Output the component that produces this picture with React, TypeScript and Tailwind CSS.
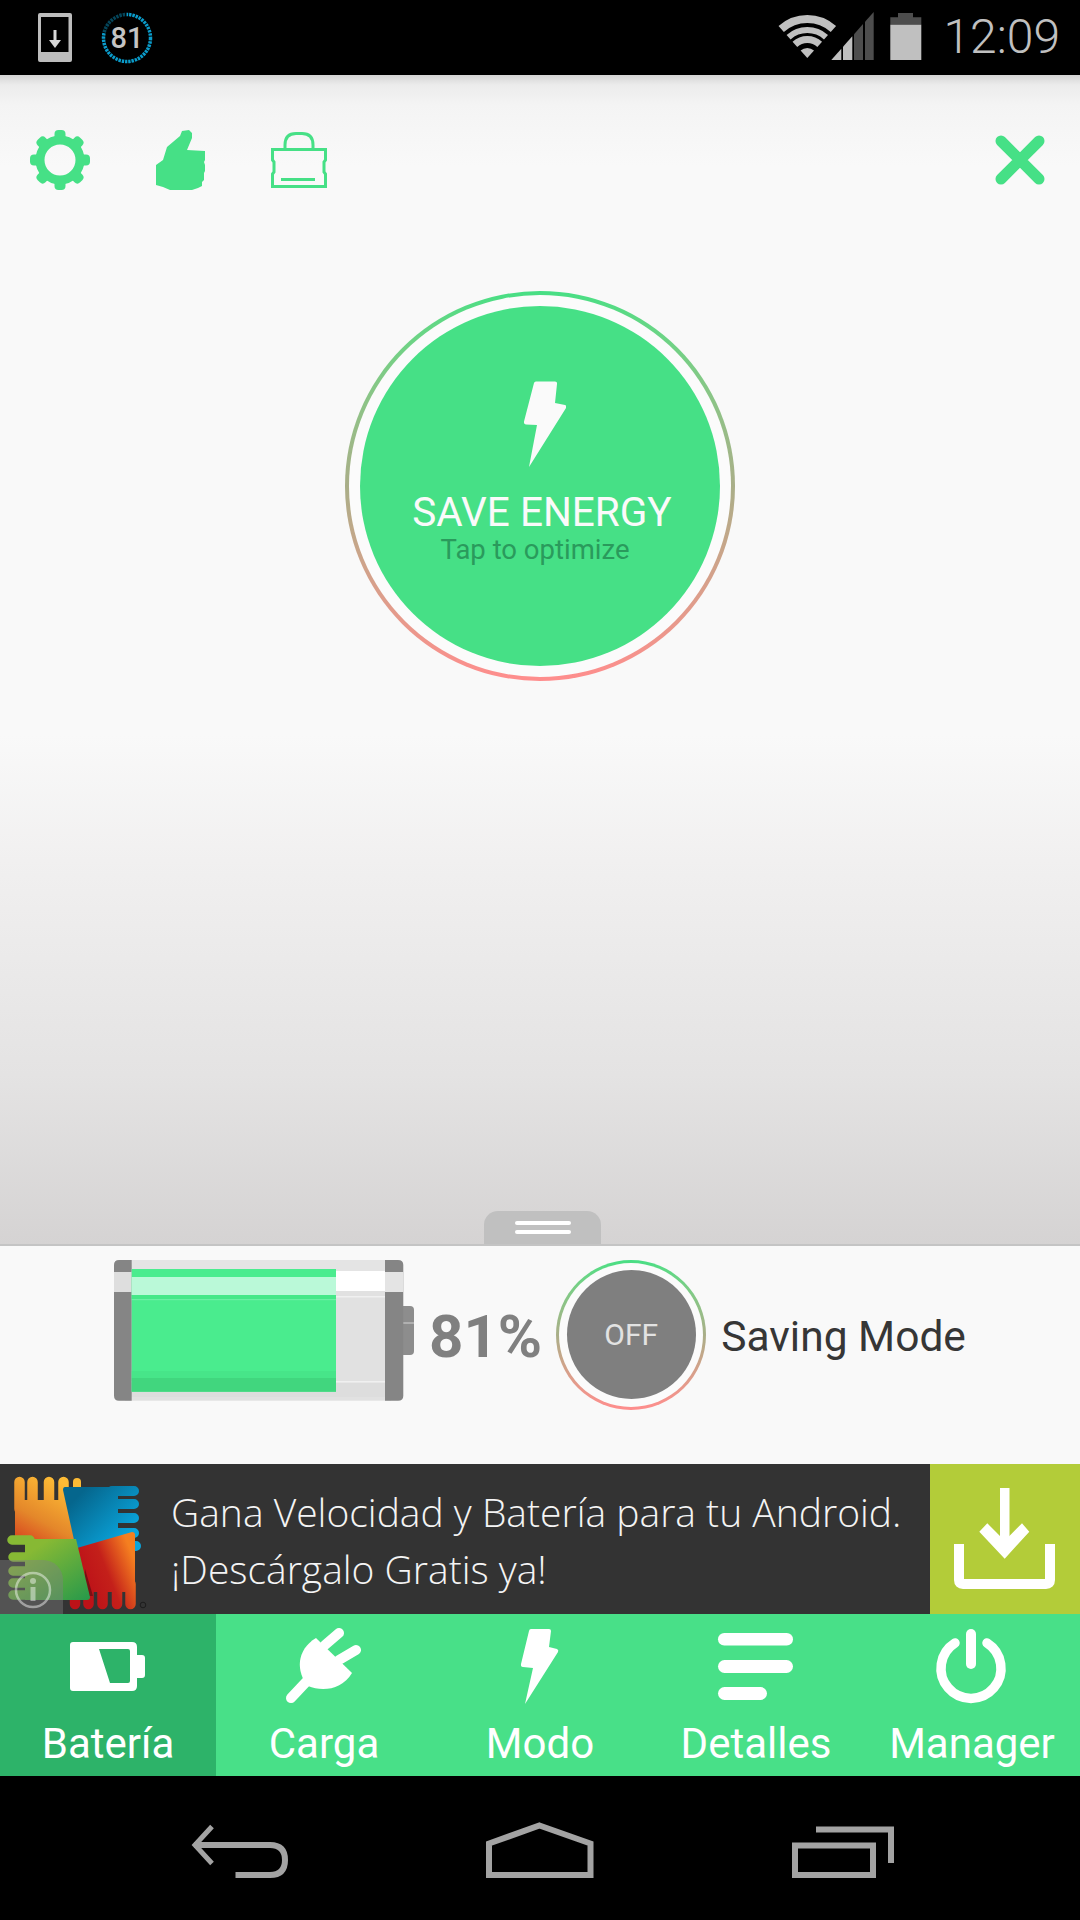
import React from 'react';

const GREEN = '#46e086';

const tabs = ['Batería', 'Carga', 'Modo', 'Detalles', 'Manager'];

const GearIcon = () => (
  <svg width="60" height="60" viewBox="0 0 60 60" className="shrink-0">
    <circle cx="30" cy="30" r="20" fill="none" stroke={GREEN} strokeWidth="9" />
    {[0, 45, 90, 135, 180, 225, 270, 315].map(a => (
      <rect key={a} x="24.5" y="0" width="11" height="14" rx="4" fill={GREEN} transform={`rotate(${a} 30 30)`} />
    ))}
  </svg>
);

const ThumbIcon = () => (
  <svg width="49" height="60" viewBox="0 0 49 60" className="shrink-0">
    <path
      d="M0 35 L7 30 L11 17 L24 6 L26 1 L33 0 L36 3 L36 8 L31 20 L49 21 L49 30 L48 32 L49 35 L49 41 L48 43 L48 50 L46 52 L46 56 L42 58 L36 60 L14 60 L7 57 L0 55 Z"
      fill={GREEN}
    />
  </svg>
);

const BagIcon = () => (
  <svg width="56" height="60" viewBox="272 130 56 60" className="shrink-0">
    <path d="M286 149 V145 Q286 133.500 297 133.500 H303 Q314 133.500 314 145 V149" fill="none" stroke={GREEN} strokeWidth="3" />
    <path d="M273.500 149.500 H326.500 V160 L325 162 V172 L326.500 174 V186.500 H273.500 V174 L275 172 V162 L273.500 160 Z" fill="none" stroke={GREEN} strokeWidth="3" />
    <rect x="282" y="178" width="34" height="3" fill={GREEN} />
  </svg>
);

const CloseIcon = () => (
  <svg width="50" height="50" viewBox="0 0 50 50" className="shrink-0 mt-[5px]">
    <path d="M6 6 L44 44 M44 6 L6 44" stroke={GREEN} strokeWidth="11" strokeLinecap="round" />
  </svg>
);

const RingGradient = () => (
  <div className="absolute inset-0 rounded-full bg-linear-to-b from-[#46df84] via-[#a9ae88] to-[#ff8d8d]" />
);

const StatusBar = () => (
  <div className="h-[75px] shrink-0 bg-black flex items-start justify-between">
    <div className="flex items-start pl-[38px] pt-[13px]">
      <svg width="34" height="49" viewBox="38 13 34 49">
        <path d="M40 13 H70 Q72 13 72 15 V60 Q72 62 70 62 H40 Q38 62 38 60 V15 Q38 13 40 13 Z M41 17 V52 H68.500 V17 Z" fill="#bdbdbd" fillRule="evenodd" />
        <path d="M53.500 30 H56.500 V40 H61 L55 48 L49 40 H53.500 Z" fill="#d8d8d8" />
      </svg>
      <div className="relative ml-[29px] -mt-[1px] w-[52px] h-[52px] flex items-center justify-center">
        <svg width="52" height="52" viewBox="0 0 52 52" className="absolute inset-0">
          <circle cx="26" cy="26" r="23.500" fill="none" stroke="#0a9ccb" strokeWidth="3.500" strokeDasharray="2.400 0.900" />
          <path d="M26 2.500 A23.500 23.500 0 0 0 3 21" fill="none" stroke="#000" strokeOpacity="0.55" strokeWidth="4.500" />
        </svg>
        <span className="text-[29px] leading-none font-medium text-[#c4c4c4]">81</span>
      </div>
    </div>
    <div className="flex items-start pr-[20px]">
      <svg width="150" height="56" viewBox="778 8 150 56" className="mt-[8px]">
        <path d="M783.200 29 A39 39 0 0 1 835.400 29" fill="none" stroke="#c0c0c0" strokeWidth="8" />
        <path d="M790.600 37.200 A28 28 0 0 1 828 37.200" fill="none" stroke="#c0c0c0" strokeWidth="6" />
        <path d="M796.900 44.300 A18.500 18.500 0 0 1 821.700 44.300" fill="none" stroke="#c0c0c0" strokeWidth="7" />
        <path d="M809.300 58 L802.600 50.600 A10 10 0 0 1 816 50.600 Z" fill="#c0c0c0" />
        <polygon points="833.300,60 843.300,48.700 843.300,60" fill="#c0c0c0" />
        <polygon points="845,46.800 854.300,36.200 854.300,60 845,60" fill="#c0c0c0" />
        <polygon points="856,34.300 865,24.100 865,60 856,60" fill="#4d4d4d" />
        <polygon points="867,21.800 875.700,12 875.700,60 867,60" fill="#4d4d4d" />
        <path d="M900 13 H915 V17.300 H923.300 V24.700 H892.300 V17.300 H900 Z" fill="#4d4d4d" />
        <rect x="892.300" y="24.700" width="31" height="35.300" fill="#c0c0c0" />
      </svg>
      <span className="ml-[17px] mt-[9px] text-[48px] leading-[56px] font-light text-[#c0c0c0]">12:09</span>
    </div>
  </div>
);

const SaveButton = () => (
  <div className="relative self-center mt-[101px] w-[390px] h-[390px] rounded-full">
    <RingGradient />
    <div className="absolute inset-[4px] rounded-full bg-[#fbfbfb]" />
    <div className="absolute inset-[15px] rounded-full bg-[#46e086] flex flex-col items-center pt-[75px]">
      <svg width="42" height="86" viewBox="525 381 42 86" className="ml-[9px]">
        <path d="M535 383 Q535.300 381.500 537 381.500 H556 Q558.500 381.500 558 384 L556 403 L566 405 Q568 406 567 408 L530 467 L538 425 L527 424.500 Q524.500 424 525 421.500 Z" fill="#fafafa" />
      </svg>
      <span className="mt-[23px] ml-[4px] text-[40.5px] leading-[44px] text-[#fafafa]">SAVE ENERGY</span>
      <span className="-mt-[1px] pr-[10px] text-[27.5px] leading-[34px] text-[#2a9a5c]">Tap to optimize</span>
    </div>
  </div>
);

const BatteryGraphic = () => (
  <svg width="310" height="150" viewBox="110 1255 310 150" className="shrink-0">
    <path d="M403 1306 H410 Q414 1306 414 1310 V1351 Q414 1355 410 1355 H403 Z" fill="#8d8d8d" />
    <rect x="403" y="1322" width="11" height="2" fill="#b0b0b0" />
    <rect x="125" y="1260" width="266" height="140.700" fill="#e1e1e1" />
    <rect x="125" y="1260" width="266" height="11" fill="#e4e4e4" />
    <rect x="125" y="1271" width="266" height="20" fill="#ffffff" />
    <rect x="125" y="1296" width="266" height="1.500" fill="#f0f0f0" />
    <rect x="125" y="1381" width="266" height="1.500" fill="#f0f0f0" />
    <rect x="125" y="1383" width="266" height="14" fill="#dddddd" />
    <path d="M119 1260 H131.700 V1400.700 H119 Q114 1400.700 114 1395.700 V1265 Q114 1260 119 1260 Z" fill="#858585" />
    <rect x="114" y="1272" width="17.700" height="20" fill="#dedede" />
    <path d="M385 1260 H398 Q403.300 1260 403.300 1265 V1395.700 Q403.300 1400.700 398 1400.700 H385 Z" fill="#858585" />
    <rect x="385" y="1272" width="18.300" height="20" fill="#e4e4e4" />
    <rect x="131.700" y="1269" width="204.300" height="122.700" fill="#4aec8e" />
    <rect x="131.700" y="1277" width="204.300" height="18" fill="#baf9d8" />
    <rect x="131.700" y="1295" width="204.300" height="4" fill="#45e888" />
    <rect x="131.700" y="1299" width="204.300" height="1.200" fill="#6bf0a4" />
    <rect x="131.700" y="1371" width="204.300" height="7" fill="#47e589" />
    <rect x="131.700" y="1378" width="204.300" height="13.700" fill="#41d67e" />
  </svg>
);

const SavingPanel = () => (
  <div className="h-[220px] shrink-0 bg-[#f9f9f9] border-t-2 border-[#c4c4c4] pl-[110px] pt-[9px]">
    <div className="flex items-center h-[150px]">
      <BatteryGraphic />
      <span className="ml-[9px] mt-[14px] text-[60px] leading-[70px] font-bold text-[#808080]">81%</span>
      <div className="relative ml-[14px] mt-[9px] w-[150px] h-[150px] shrink-0 rounded-full">
        <RingGradient />
        <div className="absolute inset-[3px] rounded-full bg-[#fbfbfb]" />
        <div className="absolute inset-[10.5px] rounded-full bg-[#7f7f7f] flex items-center justify-center">
          <span className="text-[30px] leading-none text-[#e2e2e2]">OFF</span>
        </div>
      </div>
      <span className="ml-[15px] mt-[13px] text-[42.5px] leading-[50px] text-[#363636]">Saving Mode</span>
    </div>
  </div>
);

const AvgLogo = () => (
  <svg width="150" height="150" viewBox="0 0 150 150" className="shrink-0">
    <defs>
      <linearGradient id="avgYellow" gradientUnits="userSpaceOnUse" x1="55" y1="15" x2="20" y2="78">
        <stop offset="0" stopColor="#fdbb35" />
        <stop offset="0.6" stopColor="#e4872a" />
        <stop offset="1" stopColor="#d8441f" />
      </linearGradient>
      <linearGradient id="avgBlue" gradientUnits="userSpaceOnUse" x1="80" y1="30" x2="125" y2="75">
        <stop offset="0" stopColor="#05668d" />
        <stop offset="1" stopColor="#0aa5dc" />
      </linearGradient>
      <linearGradient id="avgRed" gradientUnits="userSpaceOnUse" x1="82" y1="110" x2="132" y2="90">
        <stop offset="0" stopColor="#bd1218" />
        <stop offset="0.45" stopColor="#c4201a" />
        <stop offset="1" stopColor="#f57f20" />
      </linearGradient>
      <linearGradient id="avgGreen" gradientUnits="userSpaceOnUse" x1="45" y1="78" x2="85" y2="136">
        <stop offset="0" stopColor="#87b934" />
        <stop offset="1" stopColor="#2a9a4a" />
      </linearGradient>
    </defs>
    <g stroke="url(#avgYellow)" strokeLinecap="round">
      <path d="M19.500 18 V45 M32.500 18 V45 M49 18 V45 M63.500 18 V45" strokeWidth="10.500" />
      <path d="M77 18 V45" strokeWidth="8" />
    </g>
    <path d="M15 36 H81 V75 H18 Q15 75 15 72 Z" fill="url(#avgYellow)" />
    <g stroke="url(#avgBlue)" strokeLinecap="round">
      <path d="M112 27 H134 M112 40 H134 M112 54 H134 M112 69 H134 M112 82 H136" strokeWidth="10" />
    </g>
    <path d="M65 23 H118 V84 L78 94 L63 26 Q63 23 65 23 Z" fill="url(#avgBlue)" />
    <g stroke="url(#avgRed)" strokeLinecap="round">
      <path d="M75 120 V140 M88.500 120 V140 M102.500 120 V140 M117 120 V140 M130.500 120 V140" strokeWidth="10.500" />
    </g>
    <path d="M77 84 L132 68 Q135 68 135 71 V128 H70 V100 Z" fill="url(#avgRed)" />
    <path d="M85 105 L93 132 L84 132 Z" fill="#7a0f14" />
    <g stroke="url(#avgGreen)" strokeLinecap="round">
      <path d="M30 76 H12 M30 93 H13 M30 107 H13 M30 119 H13 M30 131 H13" strokeWidth="9.500" />
    </g>
    <path d="M25 75 H76 L90 133 Q90 136 87 136 H25 Z" fill="url(#avgGreen)" />
    <path d="M0 96 H43 A20 20 0 0 1 63 116 V150 H0 Z" fill="#808080" fillOpacity="0.42" />
    <circle cx="33" cy="126" r="17" fill="none" stroke="#ffffff" strokeOpacity="0.45" strokeWidth="2.500" />
    <rect x="30.500" y="123" width="5" height="14" fill="#ffffff" fillOpacity="0.45" />
    <circle cx="33" cy="117" r="3" fill="#ffffff" fillOpacity="0.45" />
    <circle cx="143" cy="141" r="2.800" fill="none" stroke="#1d1d1d" strokeWidth="1" />
  </svg>
);

const AdBanner = () => (
  <div className="h-[150px] shrink-0 bg-[#333333] flex">
    <AvgLogo />
    <div className="flex-1 pl-[21px] pt-[1px] flex flex-col justify-center text-[39px] leading-[57px] text-[#f4f4f4] font-light whitespace-nowrap [font-family:'Open_Sans',sans-serif]">
      <span>Gana Velocidad y Batería para tu Android.</span>
      <span>¡Descárgalo Gratis ya!</span>
    </div>
    <div className="w-[150px] shrink-0 bg-[#b3cc39]">
      <svg width="150" height="150" viewBox="930 1464 150 150">
        <rect x="1000" y="1488" width="9.500" height="54" fill="#ffffff" />
        <path d="M979.300 1531.700 L987.300 1523.300 L1004.700 1540.700 L1022 1523.300 L1029.300 1531.700 L1004.700 1558.700 Z" fill="#ffffff" />
        <path d="M959 1544 V1580 Q959 1584 963 1584 H1046 Q1050 1584 1050 1580 V1544" fill="none" stroke="#ffffff" strokeWidth="10" />
      </svg>
    </div>
  </div>
);

const TabIcon = ({ index }: { index: number }) => {
  if (index === 0) {
    return (
      <svg width="100" height="80" viewBox="58 1627 100 80">
        <path d="M73 1642 H132 Q137 1642 137 1647 V1655 H142 Q145 1655 145 1658 V1675 Q145 1678 142 1678 H137 V1686 Q137 1691 132 1691 H73 Q70 1691 70 1688 V1645 Q70 1642 73 1642 Z M99 1649 L110 1683 H128 Q130 1683 130 1681 V1651 Q130 1649 128 1649 Z" fill="#ffffff" fillRule="evenodd" />
      </svg>
    );
  }
  if (index === 1) {
    return (
      <svg width="100" height="80" viewBox="274 1627 100 80">
        <path d="M325 1645 L339 1633 M339 1660 L356 1650" stroke="#ffffff" strokeWidth="10" strokeLinecap="round" />
        <path d="M291 1698 L307 1681" stroke="#ffffff" strokeWidth="10" strokeLinecap="round" />
        <path d="M316 1638 L352 1673 C342 1690 322 1692 308 1686 C296 1672 296 1650 316 1638 Z" fill="#ffffff" />
      </svg>
    );
  }
  if (index === 2) {
    return (
      <svg width="100" height="80" viewBox="490 1627 100 80">
        <path d="M529 1631 Q529.300 1629 531 1629 H549 Q551 1629 551 1631 L549 1647 L557 1649 Q559 1650 558 1652 L525 1704 L533 1668 L523 1667 Q520.500 1667 521 1664 Z" fill="#ffffff" />
      </svg>
    );
  }
  if (index === 3) {
    return (
      <svg width="100" height="80" viewBox="706 1627 100 80">
        <rect x="718" y="1633" width="75" height="12.500" rx="6.250" fill="#ffffff" />
        <rect x="718" y="1660" width="75" height="13" rx="6.500" fill="#ffffff" />
        <rect x="718" y="1687" width="49" height="13" rx="6.500" fill="#ffffff" />
      </svg>
    );
  }
  return (
    <svg width="100" height="80" viewBox="922 1627 100 80">
      <path d="M955 1643 A30 30 0 1 0 987 1643" fill="none" stroke="#ffffff" strokeWidth="9.500" strokeLinecap="round" />
      <path d="M971 1634 V1664" stroke="#ffffff" strokeWidth="10" strokeLinecap="round" />
    </svg>
  );
};

const TabBar = () => (
  <div className="h-[162px] shrink-0 bg-[#48e088] flex">
    {tabs.map((label, i) => (
      <div key={label} className={`w-[216px] flex flex-col items-center pt-[13px] ${i === 0 ? 'bg-[#2db369]' : ''}`}>
        <TabIcon index={i} />
        <span className="mt-[12px] text-[42px] leading-[50px] text-white">{label}</span>
      </div>
    ))}
  </div>
);

const NavBar = () => (
  <div className="h-[144px] shrink-0 bg-black flex items-start pt-[44px] pl-[186px]">
    <svg width="110" height="60" viewBox="186 1820 110 60">
      <path d="M212 1826.500 L195 1845 L212 1863.500" fill="none" stroke="#a3a3a3" strokeWidth="5" />
      <path d="M194 1845 H270 Q285 1845 285 1860 Q285 1875 270 1875 H235.500" fill="none" stroke="#a3a3a3" strokeWidth="6" />
    </svg>
    <svg width="110" height="60" viewBox="485 1820 110 60" className="ml-[189px]">
      <path d="M539.500 1825.500 L590.500 1843.500 V1875 H489 V1843.500 Z" fill="none" stroke="#a3a3a3" strokeWidth="6" />
    </svg>
    <svg width="110" height="60" viewBox="788 1820 110 60" className="ml-[193px]">
      <rect x="795" y="1845.500" width="78" height="29.500" fill="none" stroke="#a3a3a3" strokeWidth="6" />
      <path d="M816 1829.500 H891 V1863" fill="none" stroke="#a3a3a3" strokeWidth="6" />
    </svg>
  </div>
);

export default function App() {
  return (
    <div className="w-[1080px] h-[1920px] flex flex-col overflow-hidden [font-family:Roboto,sans-serif]">
      <StatusBar />
      <div className="flex-1 flex flex-col bg-[linear-gradient(180deg,#d4d4d4_0,#ececec_10px,#f4f4f4_30px,#f9f9f9_90px,#f9f9f9_660px,#f0efef_800px,#e4e3e3_1000px,#d5d3d3_1169px)]">
        <div className="flex items-start justify-between pt-[55px] pl-[30px] pr-[35px]">
          <div className="flex items-start gap-[66px]">
            <GearIcon />
            <ThumbIcon />
            <BagIcon />
          </div>
          <CloseIcon />
        </div>
        <SaveButton />
        <div className="mt-auto self-center ml-[5px] w-[117px] h-[33px] rounded-t-[14px] bg-[#c0c0c0] flex flex-col items-center justify-center gap-[5px]">
          <div className="w-[56px] h-[4px] rounded-full bg-white" />
          <div className="w-[56px] h-[4px] rounded-full bg-white" />
        </div>
      </div>
      <SavingPanel />
      <AdBanner />
      <TabBar />
      <NavBar />
    </div>
  );
}
